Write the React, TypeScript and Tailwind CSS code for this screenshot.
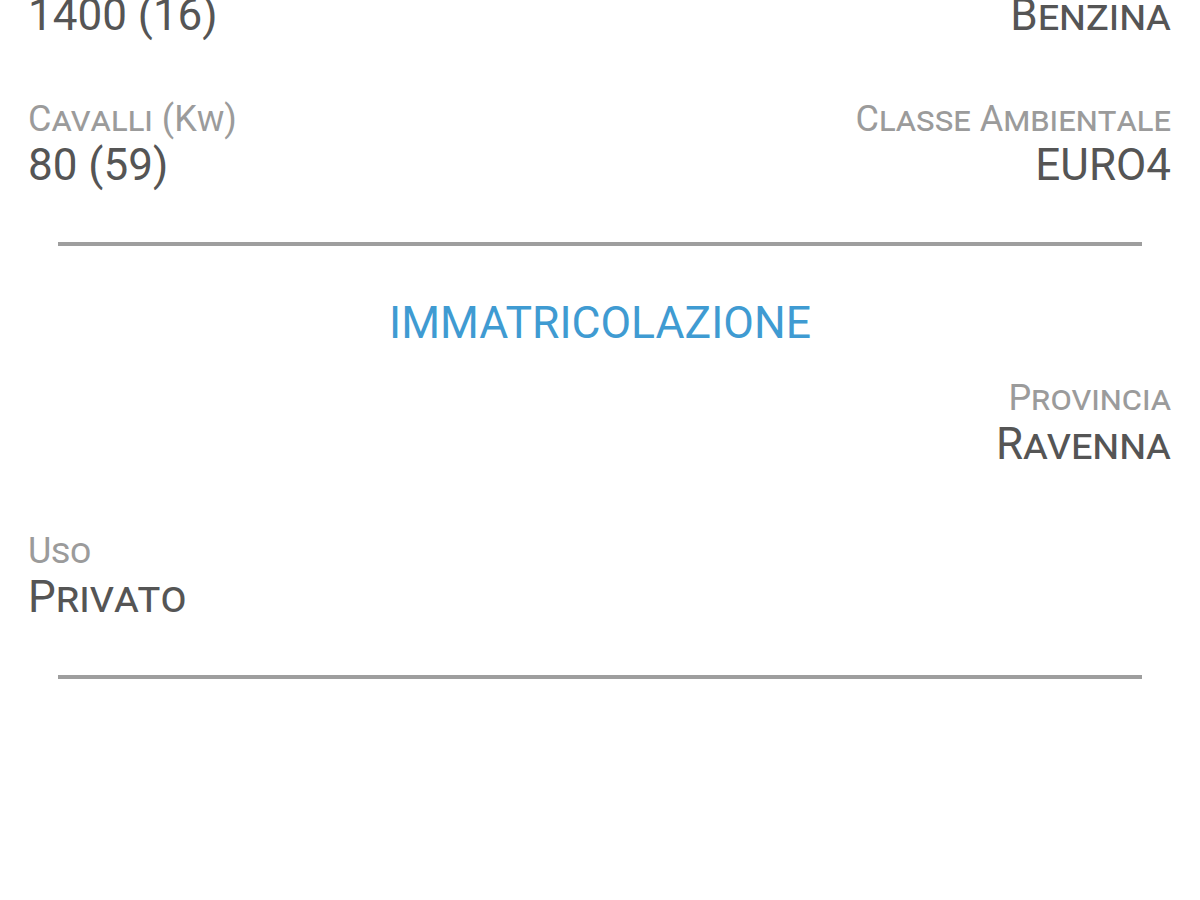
import React from "react";

const font = { fontFamily: "Roboto, 'Noto Sans', Arial, sans-serif" };

function Field({ label, value, right }: { label: string; value: string; right?: boolean }) {
  return (
    <div className={right ? "flex flex-col items-end text-right" : "flex flex-col items-start text-left"}>
      <div className="text-[36px] leading-[40px] text-[#9b9b9b] [font-variant:small-caps]">{label}</div>
      <div className="text-[44px] leading-[52px] text-[#555555] [font-variant:small-caps]">{value}</div>
    </div>
  );
}

function ValueOnly({ value, right }: { value: string; right?: boolean }) {
  return (
    <div className={right ? "text-right" : "text-left"}>
      <div className="text-[44px] leading-[52px] text-[#555555] [font-variant:small-caps]">{value}</div>
    </div>
  );
}

export default function App() {
  return (
    <div className="w-[1200px] h-[900px] overflow-hidden bg-white" style={font}>
      <div className="-mt-[11px] pl-[28px] pr-[29px]">
        <div className="flex justify-between">
          <ValueOnly value="1400 (16)" />
          <ValueOnly value="Benzina" right />
        </div>
        <div className="mt-[58px] flex justify-between">
          <Field label="Cavalli (Kw)" value="80 (59)" />
          <Field label="Classe Ambientale" value="EURO4" right />
        </div>
      </div>
      <div className="mx-[58px] mt-[51px] h-[4px] bg-[#9e9e9e]" />
      <div className="mt-[51px] text-center text-[44.5px] leading-[52px] text-[#3f9bd2]">IMMATRICOLAZIONE</div>
      <div className="pl-[28px] pr-[29px]">
        <div className="mt-[29px] flex justify-end">
          <Field label="Provincia" value="Ravenna" right />
        </div>
        <div className="mt-[61px] flex justify-start">
          <Field label="Uso" value="Privato" />
        </div>
      </div>
      <div className="mx-[58px] mt-[52px] h-[4px] bg-[#9e9e9e]" />
    </div>
  );
}
